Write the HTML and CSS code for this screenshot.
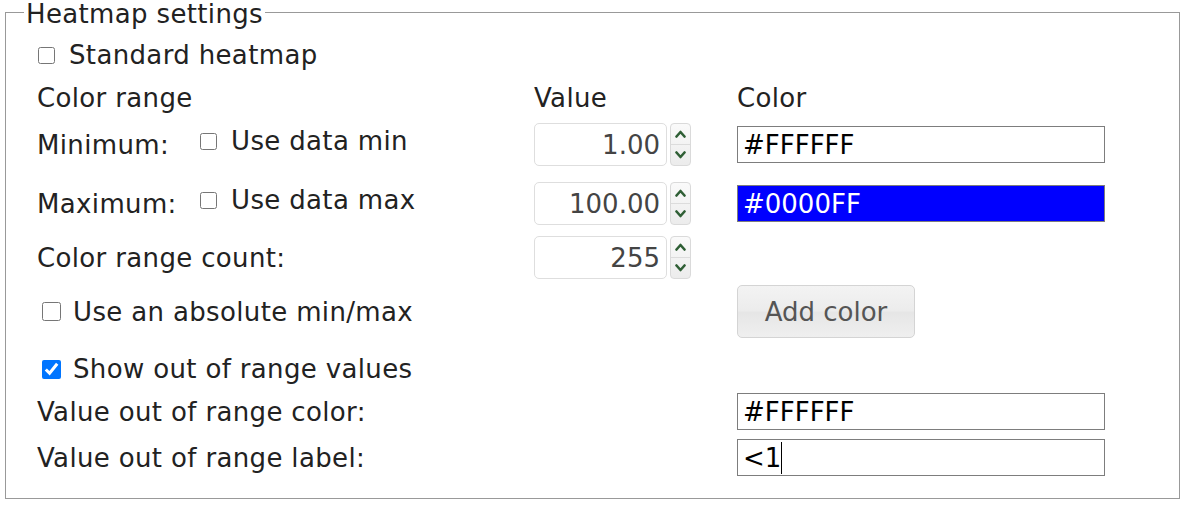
FILE: index.html
```html
<!DOCTYPE html>
<html>
<head>
    <link rel="stylesheet" href="styles.css">
</head>
<body>
<fieldset class="settings">
  <legend>Heatmap settings</legend>
  <div class="form">
    <div class="row first">
      <label class="check"><input type="checkbox" class="cb"> Standard heatmap</label>
    </div>

    <div class="row head">
      <div>Color range</div>
      <div>Value</div>
      <div>Color</div>
    </div>

    <div class="row num-row">
      <div class="lbl-wrap">
        <span class="lbl">Minimum:</span>
        <label class="check opt"><input type="checkbox" class="cb"> Use data min</label>
      </div>
      <div class="spin">
        <input type="text" class="num" value="1.00">
        <div class="spin-btns">
          <span><svg width="11" height="8" viewBox="0 0 11 8"><polyline points="1.5,6.5 5.5,2 9.5,6.5"/></svg></span>
          <span><svg width="11" height="8" viewBox="0 0 11 8"><polyline points="1.5,1.5 5.5,6 9.5,1.5"/></svg></span>
        </div>
      </div>
      <div><input type="text" class="color" value="#FFFFFF"></div>
    </div>

    <div class="row num-row max">
      <div class="lbl-wrap">
        <span class="lbl">Maximum:</span>
        <label class="check opt"><input type="checkbox" class="cb"> Use data max</label>
      </div>
      <div class="spin">
        <input type="text" class="num" value="100.00">
        <div class="spin-btns">
          <span><svg width="11" height="8" viewBox="0 0 11 8"><polyline points="1.5,6.5 5.5,2 9.5,6.5"/></svg></span>
          <span><svg width="11" height="8" viewBox="0 0 11 8"><polyline points="1.5,1.5 5.5,6 9.5,1.5"/></svg></span>
        </div>
      </div>
      <div><input type="text" class="color blue" value="#0000FF"></div>
    </div>

    <div class="row num-row count">
      <div>Color range count:</div>
      <div class="spin">
        <input type="text" class="num" value="255">
        <div class="spin-btns">
          <span><svg width="11" height="8" viewBox="0 0 11 8"><polyline points="1.5,6.5 5.5,2 9.5,6.5"/></svg></span>
          <span><svg width="11" height="8" viewBox="0 0 11 8"><polyline points="1.5,1.5 5.5,6 9.5,1.5"/></svg></span>
        </div>
      </div>
      <div></div>
    </div>

    <div class="row abs">
      <label class="check big"><input type="checkbox" class="cb"> Use an absolute min/max</label>
      <div></div>
      <div><button type="button" class="add-btn">Add color</button></div>
    </div>

    <div class="row show">
      <label class="check big"><input type="checkbox" class="cb" checked> Show out of range values</label>
    </div>

    <div class="row oor">
      <div>Value out of range color:</div>
      <div></div>
      <div><input type="text" class="color" value="#FFFFFF"></div>
    </div>

    <div class="row oor">
      <div>Value out of range label:</div>
      <div></div>
      <div class="field"><input type="text" class="color" value="&lt;1"><span class="caret"></span></div>
    </div>
  </div>
</fieldset>
</body>
</html>
```

FILE: styles.css
```css
body {
    margin: 0;
    font-family: "DejaVu Sans", Verdana, sans-serif;
    font-size: 26px;
    line-height: 30px;
    letter-spacing: 0.35px;
    color: #222;
    background: #fff;
}

.settings {
    margin: 0 5px;
    padding: 0 20px 22px 18px;
    border: 1px solid #999;
}

.settings legend {
    padding: 4px 2px 0;
    line-height: 20px;
}

.form {
    padding-left: 13px;
}

.row {
    display: grid;
    grid-template-columns: 497px 203px 368px;
    align-items: center;
    margin-top: 16px;
}

.row.head { margin-top: 13px; }
.row.num-row { margin-top: 10px; height: 43px; }
.row.max { margin-top: 16px; }
.row.count { margin-top: 11px; }
.row.abs { margin-top: 6px; }
.row.oor { margin-top: 9px; }

.check {
    display: flex;
    align-items: center;
    white-space: nowrap;
}

.cb {
    width: 17px;
    height: 17px;
    margin: 0 14px 0 1px;
}

.big .cb {
    width: 19px;
    height: 19px;
    margin: 0 12px 0 5px;
}

.lbl-wrap {
    display: flex;
    align-items: center;
}

.lbl {
    width: 163px;
}

.opt {
    margin-bottom: 7px;
}

.opt .cb {
    margin-left: 0;
}

/* number spinner */
.spin {
    display: flex;
    height: 43px;
}

.num {
    box-sizing: border-box;
    width: 133px;
    height: 43px;
    margin: 0;
    padding: 0 6px;
    border: 1px solid #dedede;
    border-radius: 5px;
    font: inherit;
    color: #444;
    text-align: right;
    background: #fff;
}

.spin-btns {
    box-sizing: border-box;
    width: 21px;
    margin-left: 3px;
    display: flex;
    flex-direction: column;
    border: 1px solid #dadada;
    border-radius: 4px;
    background: linear-gradient(#fafafa, #ececec);
}

.spin-btns span {
    flex: 1;
    display: flex;
    align-items: center;
    justify-content: center;
}

.spin-btns span:first-child {
    border-bottom: 1px solid #dcdcdc;
}

.spin-btns polyline {
    fill: none;
    stroke: #2f5f35;
    stroke-width: 2.6;
    stroke-linecap: round;
    stroke-linejoin: round;
}

/* colour fields */
.color {
    box-sizing: border-box;
    width: 368px;
    height: 37px;
    margin: 0;
    padding: 0 5px;
    border: 1px solid #7d7d7d;
    border-radius: 0;
    font: inherit;
    letter-spacing: normal;
    color: #000;
    background: #fff;
    outline: none;
}

.color.blue {
    background: #0000ff;
    color: #fff;
}

.field {
    position: relative;
}

.caret {
    position: absolute;
    left: 44px;
    top: 3px;
    width: 1px;
    height: 32px;
    background: #000;
}

.add-btn {
    box-sizing: border-box;
    width: 178px;
    height: 53px;
    margin: 0;
    padding: 0;
    border: 1px solid #d4d4d4;
    border-radius: 5px;
    font: inherit;
    color: #555;
    background: linear-gradient(#f3f3f3 0%, #ececec 48%, #e6e6e6 52%, #efefef 100%);
}
```
